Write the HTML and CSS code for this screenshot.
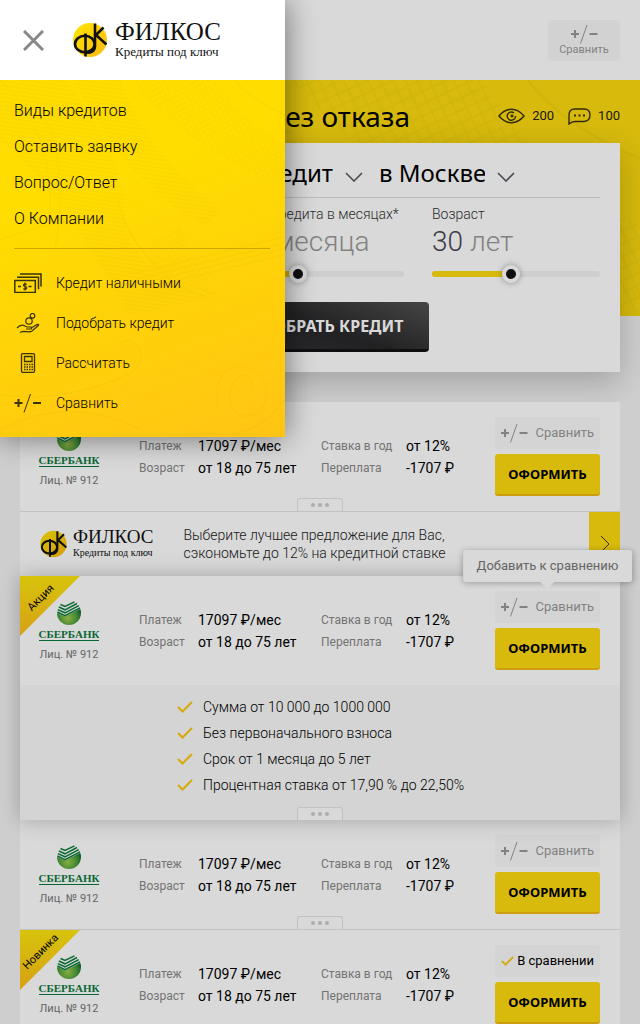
FILE: index.html
```html
<!DOCTYPE html>
<html lang="ru">
<head>
<meta charset="utf-8">
<meta name="viewport" content="width=device-width, initial-scale=1">
<title>Филкос</title>
<link rel="stylesheet" href="styles.css">
</head>
<body>
<svg class="defs" aria-hidden="true">
  <defs>
    <linearGradient id="gold" x1="0" y1="0" x2="1" y2="1"><stop offset="0" stop-color="#ffe600"/><stop offset="1" stop-color="#fcb913"/></linearGradient>
    <radialGradient id="green" cx=".45" cy=".7" r=".6"><stop offset="0" stop-color="#9fcb4e"/><stop offset=".65" stop-color="#4c9d3c"/><stop offset="1" stop-color="#0b6b35"/></radialGradient>
    <pattern id="mesh" width="7" height="7" patternUnits="userSpaceOnUse" patternTransform="rotate(20)"><path d="M0 0l7 7M7 0L0 7" stroke="#a88400" stroke-width=".6" fill="none"/></pattern>
    <pattern id="hatch" width="4" height="4" patternUnits="userSpaceOnUse" patternTransform="rotate(8)"><path d="M0 1h4" stroke="#a88400" stroke-width="1"/></pattern>
  </defs>
  <symbol id="mark" viewBox="0 0 34 36">
    <circle cx="17" cy="18" r="17" fill="url(#gold)"/>
    <g fill="none" stroke="#111" stroke-width="2.6"><ellipse cx="11.800" cy="22" rx="9.800" ry="8.200"/><path d="M12.500 11.500V34.500M12 30.500q9 1.500 10-6V1.500M30.500 5.500L23 13l10.500 9.500"/></g>
  </symbol>
  <symbol id="plusminus" viewBox="0 0 27 20">
    <path d="M0 10h8M4 6v8M18.500 10h8" stroke="currentColor" stroke-width="2" fill="none"/><path d="M16 1L9.500 19.500" stroke="currentColor" stroke-width="1" fill="none"/>
  </symbol>
  <symbol id="tick" viewBox="0 0 16 12"><path d="M1 6l4.500 4.500L15 1" fill="none" stroke="#fcc912" stroke-width="2.2"/></symbol>
  <symbol id="chevron" viewBox="0 0 18 10"><path d="M1 1l8 8 8-8" fill="none" stroke="#555962" stroke-width="1.6"/></symbol>
  <symbol id="ball" viewBox="0 0 24 24">
    <circle cx="12" cy="12" r="12" fill="url(#green)"/>
    <path d="M-1-1H25V7L8 15.500 0 12z" fill="#fff"/>
    <path d="M3.500 3.500L8 5.500 17.500.8M1.800 6L8 8.800 20 2.500M.8 8.600L8 11.800 21.800 4.600M.4 11L8 14.600 23 6.800" fill="none" stroke="#0e7d3c" stroke-width="1.500"/>
  </symbol>
  <symbol id="guilloche" viewBox="0 0 285 358">
    <g opacity=".07">
      <path d="M0 0H65Q130 80 125 150 145 200 210 218L130 236Q60 110 0 60z" fill="url(#hatch)"/>
      <path d="M75 0H120Q150 80 222 130L205 146Q120 100 75 0z" fill="url(#hatch)"/>
      <path d="M130 0H215Q240 40 285 65V105Q200 80 130 0zM150 160l30-15 32 65-62 12z" fill="url(#mesh)"/>
      <g fill="none" stroke="#a88400"><path d="M0 0Q60 55 48 150M20 0Q75 60 55 170M120 130Q150 205 210 218M118 120Q132 190 215 215M235 0Q250 20 285 35M130 195l155-38M135 200l150-37M145 203l140-34M155 206l130-31M0 160Q40 145 80 140M120 264c20-10 30 20 10 30q-60 30-130 22M0 350q70-35 140 0M218 330c-10-60 50-50 48-15s-45 25-35-5 30-5 18 5M190 350q60 20 95-30"/></g>
    </g>
  </symbol>
</svg>

<div class="page">
  <header class="topbar">
    <button class="compare-top" type="button"><svg class="pm"><use href="#plusminus"/></svg>Сравнить</button>
  </header>

  <section class="hero">
    <svg class="hero-art" viewBox="0 0 285 358" preserveAspectRatio="xMaxYMin slice" aria-hidden="true"><use href="#guilloche"/></svg>
    <div class="hero-head">
      <h1>Кредит без отказа</h1>
      <div class="stats">
        <span class="stat"><svg class="eye" viewBox="0 0 28 16"><g fill="none" stroke="#3a3208" stroke-width="1.5"><path d="M1 8Q7 1 14 1t13 7Q21 15 14 15T1 8z"/><path d="M16.500 4.700A4.300 4.300 0 1 0 18.200 8"/></g><circle cx="14.500" cy="8" r="1.500" fill="#3a3208"/></svg>200</span>
        <span class="stat"><svg class="bubble" viewBox="0 0 23 17"><path d="M1 16V7q0-6 6-6h9q6 0 6 6t-6 6.500H7q-3 0-6 2.500z" fill="none" stroke="#3a3208" stroke-width="1.400"/><path d="M6 7.500h2M10.500 7.500h2M15 7.500h2" stroke="#3a3208" stroke-width="2"/></svg>100</span>
      </div>
    </div>
    <form class="panel">
      <div class="pickers">
        <span class="picker picker-type"><select aria-label="Вид кредита"><option>Потребительский кредит</option></select><svg><use href="#chevron"/></svg></span>
        <span class="picker picker-city"><select aria-label="Город"><option>в Москве</option></select><svg><use href="#chevron"/></svg></span>
      </div>
      <div class="sliders">
        <div class="field field-term"><label for="term">Срок кредита в месяцах*</label><output for="term">24 <i>месяца</i></output><input id="term" type="range" min="0" max="68" value="24" style="--fill:36%"></div>
        <div class="field"><label for="age">Возраст</label><output for="age">30 <i>лет</i></output><input id="age" type="range" min="16" max="46" value="30" style="--fill:47%"></div>
      </div>
      <button class="pick" type="submit">ПОДОБРАТЬ КРЕДИТ</button>
    </form>
  </section>

  <main class="offers">
    <article class="offer">
      <div class="row">
        <div class="bank"><svg class="ball"><use href="#ball"/></svg><b>СБЕРБАНК</b><small>Лиц. № 912</small></div>
        <dl><dt>Платеж</dt><dd>17097 ₽/мес</dd><dt>Ставка в год</dt><dd>от 12%</dd><dt>Возраст</dt><dd>от 18 до 75 лет</dd><dt>Переплата</dt><dd>-1707 ₽</dd></dl>
        <div class="actions"><button class="compare" type="button"><svg class="pm"><use href="#plusminus"/></svg>Сравнить</button><button class="apply" type="button">ОФОРМИТЬ</button></div>
      </div>
      <button class="more" type="button" aria-label="Подробнее"><i></i><i></i><i></i></button>
    </article>

    <aside class="promo">
      <div class="brand brand-small"><svg><use href="#mark"/></svg><div><strong>ФИЛКОС</strong><span>Кредиты под ключ</span></div></div>
      <p>Выберите лучшее предложение для Вас,<br>сэкономьте до 12% на кредитной ставке</p>
      <a href="#" aria-label="Перейти"><svg viewBox="0 0 10 18"><path d="M1 1l8 8-8 8" fill="none" stroke="#3a3208" stroke-width="1"/></svg></a>
    </aside>

    <article class="offer offer-open">
      <div class="row">
        <span class="ribbon"><span>Акция</span></span>
        <div class="bank"><svg class="ball"><use href="#ball"/></svg><b>СБЕРБАНК</b><small>Лиц. № 912</small></div>
        <dl><dt>Платеж</dt><dd>17097 ₽/мес</dd><dt>Ставка в год</dt><dd>от 12%</dd><dt>Возраст</dt><dd>от 18 до 75 лет</dd><dt>Переплата</dt><dd>-1707 ₽</dd></dl>
        <div class="actions"><button class="compare" type="button"><svg class="pm"><use href="#plusminus"/></svg>Сравнить</button><span class="tip" role="tooltip">Добавить к сравнению</span><button class="apply" type="button">ОФОРМИТЬ</button></div>
      </div>
      <ul class="terms">
        <li><svg><use href="#tick"/></svg>Сумма от 10 000 до 1000 000</li>
        <li><svg><use href="#tick"/></svg>Без первоначального взноса</li>
        <li><svg><use href="#tick"/></svg>Срок от 1 месяца до 5 лет</li>
        <li><svg><use href="#tick"/></svg>Процентная ставка от 17,90 % до 22,50%</li>
      </ul>
      <button class="more" type="button" aria-label="Свернуть"><i></i><i></i><i></i></button>
    </article>

    <article class="offer">
      <div class="row">
        <div class="bank"><svg class="ball"><use href="#ball"/></svg><b>СБЕРБАНК</b><small>Лиц. № 912</small></div>
        <dl><dt>Платеж</dt><dd>17097 ₽/мес</dd><dt>Ставка в год</dt><dd>от 12%</dd><dt>Возраст</dt><dd>от 18 до 75 лет</dd><dt>Переплата</dt><dd>-1707 ₽</dd></dl>
        <div class="actions"><button class="compare" type="button"><svg class="pm"><use href="#plusminus"/></svg>Сравнить</button><button class="apply" type="button">ОФОРМИТЬ</button></div>
      </div>
      <button class="more" type="button" aria-label="Подробнее"><i></i><i></i><i></i></button>
    </article>

    <article class="offer">
      <div class="row">
        <span class="ribbon"><span>Новинка</span></span>
        <div class="bank"><svg class="ball"><use href="#ball"/></svg><b>СБЕРБАНК</b><small>Лиц. № 912</small></div>
        <dl><dt>Платеж</dt><dd>17097 ₽/мес</dd><dt>Ставка в год</dt><dd>от 12%</dd><dt>Возраст</dt><dd>от 18 до 75 лет</dd><dt>Переплата</dt><dd>-1707 ₽</dd></dl>
        <div class="actions"><button class="compare compare-on" type="button"><svg class="tick"><use href="#tick"/></svg>В сравнении</button><button class="apply" type="button">ОФОРМИТЬ</button></div>
      </div>
    </article>
  </main>
</div>

<div class="shade"></div>

<aside class="drawer">
  <div class="drawer-head">
    <button class="close" type="button" aria-label="Закрыть"><svg viewBox="0 0 21 21"><path d="M1 1l19 19M20 1L1 20" stroke="#888" stroke-width="3"/></svg></button>
    <div class="brand"><svg><use href="#mark"/></svg><div><strong>ФИЛКОС</strong><span>Кредиты под ключ</span></div></div>
  </div>
  <nav class="drawer-nav">
    <svg class="nav-art" viewBox="0 0 285 358" preserveAspectRatio="none" aria-hidden="true"><use href="#guilloche"/></svg>
    <ul class="links">
      <li><a href="#">Виды кредитов</a></li>
      <li><a href="#">Оставить заявку</a></li>
      <li><a href="#">Вопрос/Ответ</a></li>
      <li><a href="#">О Компании</a></li>
    </ul>
    <ul class="tools">
      <li><a href="#"><svg viewBox="0 0 28 20"><g fill="none" stroke="#3a3208" stroke-width="1.500"><path d="M.8 7.500h20.500v12H.8zM3 4.200h21.500v12M6 1h21v12.500"/><path d="M4 13.500h3M14.500 13.500h3" /><path d="M12.800 11.500q-2-1.200-3 0t1.300 2 1.300 2-3.100.2M11 9.500v8" stroke-width="1.200"/></g></svg>Кредит наличными</a></li>
      <li><a href="#"><svg viewBox="0 0 28 20"><g fill="none" stroke="#3a3208" stroke-width="1.200"><circle cx="18.500" cy="2.800" r="2.300"/><circle cx="15" cy="8" r="3.200"/><path d="M3 15q4-4.500 8-2l2 1h4q1.500 1.500-.5 2H12M17 15l6-3.500q2-.5 1.500.8L18 18q-1.500 1-4 .8l-4-.5q-2 0-4 1.200"/></g></svg>Подобрать кредит</a></li>
      <li><a href="#"><svg viewBox="0 0 28 20"><g fill="none" stroke="#3a3208" stroke-width="1.300"><rect x="7.500" y=".7" width="13" height="18.600" rx="1"/><path d="M10.500 3.500h7.500v5h-7.500z"/><path d="M10 11.500h9M10 14h9M10 16.500h9" stroke-dasharray="1.500 1"/></g></svg>Рассчитать</a></li>
      <li><a href="#"><svg class="pm"><use href="#plusminus"/></svg>Сравнить</a></li>
    </ul>
  </nav>
</aside>
</body>
</html>
```
FILE: styles.css
```css
* { box-sizing: border-box; }
html, body { height: 100%; }
body { margin: 0; overflow: hidden; background: #f3f3f3; color: #000; font: 14px/22px Roboto, "Noto Sans", sans-serif; }
ul, dl, dd, p, h1 { margin: 0; padding: 0; list-style: none; }
button { border: 0; padding: 0; font: inherit; color: inherit; cursor: pointer; }
a { color: inherit; text-decoration: none; }
svg { display: block; flex: none; }
.defs { position: absolute; width: 0; height: 0; }
.pm { width: 27px; height: 20px; }

.topbar { display: flex; justify-content: flex-end; padding: 20px; height: 80px; background: #fff; }
.compare-top { display: flex; flex-direction: column; align-items: center; width: 72px; height: 41px; padding-top: 4px; border-radius: 4px; background: #f7f7f7; color: #999; font-size: 11px; line-height: 12px; }

.hero { position: relative; padding: 12px 20px 0; margin-bottom: 30px; background: linear-gradient(#fddb0e, #fddb0e) no-repeat; background-size: 100% 236px; }
.hero-art { position: absolute; left: 0; top: 0; width: 100%; height: 236px; }
.hero-head { position: relative; display: flex; justify-content: space-between; align-items: center; height: 51px; padding-bottom: 3px; }
h1 { width: 65%; text-align: right; font: 400 28px/40px "Noto Sans", sans-serif; }
.stats { display: flex; gap: 14px; font-size: 13px; font-weight: 400; color: #222; }
.stat { display: flex; align-items: center; gap: 7px; }
.eye { width: 27px; height: 16px; }
.bubble { width: 23px; height: 17px; }

.panel { position: relative; display: flex; flex-direction: column; padding: 10px 20px 20px; background: #fff; box-shadow: 0 10px 30px rgba(0, 0, 0, .22); }
.pickers { display: flex; gap: 16px; height: 45px; border-bottom: 1px solid #ddd; }
.picker { position: relative; height: 44px; display: flex; align-items: center; }
.picker-type { flex: 0 0 323px; }
.picker-city { flex: 0 0 136px; }
.picker select { width: 100%; height: 44px; padding: 0 30px 4px 0; border: 0; background: none; appearance: none; color: #000; font: 400 24px/32px "Noto Sans", sans-serif; }
.picker-type select { text-align: right; text-align-last: right; }
.picker svg { position: absolute; right: 0; top: 19px; width: 18px; height: 10px; pointer-events: none; }
.sliders { display: grid; grid-template-columns: repeat(3, 1fr); gap: 28px; padding-top: 6px; }
.field { display: flex; flex-direction: column; }
.field-term { grid-column: 2; }
.field label { font-size: 14px; font-weight: 300; line-height: 20px; color: #333; white-space: nowrap; }
.field output { font-size: 28px; font-weight: 300; line-height: 36px; color: #444752; }
.field i { font-style: normal; color: #999; }
.field input { width: 100%; height: 18px; margin: 5px 0 0; appearance: none; background: none; }
.field input::-webkit-slider-runnable-track { height: 6px; border-radius: 3px; background: linear-gradient(to right, #fddb0e var(--fill), #f3f3f3 var(--fill)); }
.field input::-webkit-slider-thumb { appearance: none; width: 18px; height: 18px; margin-top: -6px; border: 4px solid #fff; border-radius: 50%; background: #111; box-shadow: 0 0 6px rgba(0, 0, 0, .35); }
.pick { align-self: center; width: 218px; height: 50px; margin-top: 19px; border-radius: 4px; border-bottom: 3px solid #111; background: linear-gradient(20deg, #333338, #28282a 50%, #525252); color: #fff; font: 700 16px/20px "Noto Sans", sans-serif; white-space: nowrap; }

.offers { margin: 0 20px; }
.offer { position: relative; background: #fff; border-bottom: 1px solid #e4e4e4; }
.offer-open { z-index: 1; border-bottom: 0; box-shadow: 0 0 20px rgba(0, 0, 0, .25); }
.row { display: grid; grid-template-columns: 58px 1fr 105px; align-items: center; padding: 15px 20px; }
.bank { display: flex; flex-direction: column; align-items: center; padding-top: 4px; }
.ball { width: 24px; height: 24px; }
.bank b { margin-top: 3px; border-bottom: 1px solid #0b7a3e; color: #0b7a3e; font: 700 11px/12px "Liberation Serif", serif; }
.bank small { margin-top: 4px; font-size: 11px; font-weight: 400; line-height: 20px; color: #777; white-space: nowrap; }
.row dl { display: grid; grid-template-columns: 59px 123px 85px 1fr; padding-left: 41px; white-space: nowrap; }
.row dt { font-size: 12px; font-weight: 400; color: #888; }
.row dd { font-weight: 400; }
.actions { position: relative; display: flex; flex-direction: column; gap: 5px; }
.compare { display: flex; align-items: center; justify-content: space-between; height: 32px; padding: 0 6px; border-radius: 4px; background: #f9f9f9; color: #999; font-size: 13px; font-weight: 400; }
.compare-on { color: #000; font-size: 13px; font-weight: 400; }
.tick { width: 13px; height: 10px; }
.apply { height: 42px; border-radius: 3px; border-bottom: 2px solid #f2b912; background: #fddb0e; font: 700 13px/20px "Noto Sans", sans-serif; }
.more { position: absolute; left: 50%; bottom: 0; margin-left: -23px; display: flex; align-items: center; justify-content: center; gap: 3px; width: 46px; height: 13px; border: 1px solid #e4e4e4; border-bottom: 0; border-radius: 3px 3px 0 0; background: #fff; }
.more i { width: 4px; height: 4px; border-radius: 50%; background: #ccc; }
.ribbon { position: absolute; left: 0; top: 0; width: 60px; height: 60px; background: linear-gradient(#fde60e, #fdbd1a); clip-path: polygon(0 0, 100% 0, 0 100%); }
.ribbon span { position: absolute; left: -9px; top: 12px; width: 60px; font-size: 11px; line-height: 20px; text-align: center; transform: rotate(-45deg); }
.tip { position: absolute; left: 50%; bottom: calc(100% + 9px); z-index: 2; transform: translateX(-50%); padding: 5px 14px; border-radius: 3px; background: #fff; box-shadow: 0 1px 6px rgba(0, 0, 0, .3); color: #777; font-size: 13px; font-weight: 400; white-space: nowrap; }
.tip::after { content: ""; position: absolute; left: 50%; top: 100%; margin-left: -7px; border: 7px solid transparent; border-top-color: #fff; border-bottom: 0; }

.promo { display: flex; align-items: center; height: 64px; padding-left: 20px; background: #fff; }
.promo p { flex: 1; padding-left: 30px; font-weight: 300; line-height: 18px; color: #222; white-space: nowrap; }
.promo a { display: flex; align-items: center; justify-content: center; width: 31px; height: 100%; background: #fddb0e; }
.promo a svg { width: 10px; height: 18px; }

.terms { padding: 9px 20px 22px 157px; background: #f9f9f9; }
.terms li { display: flex; align-items: center; gap: 10px; line-height: 26px; font-weight: 300; color: #000; }
.terms svg { width: 16px; height: 12px; }

.shade { position: fixed; inset: 0; z-index: 5; background: rgba(0, 0, 0, .15); }

.drawer { position: fixed; left: 0; top: 0; z-index: 6; width: 285px; box-shadow: 0 0 30px rgba(0, 0, 0, .5); }
.drawer-head { display: flex; align-items: center; gap: 29px; height: 80px; padding-left: 23px; background: #fff; }
.close { width: 21px; height: 21px; background: none; }
.brand { display: flex; align-items: center; gap: 8px; font-family: "Liberation Serif", serif; color: #111; white-space: nowrap; }
.brand svg { width: 34px; height: 36px; }
.brand strong, .brand span { display: block; font-weight: 400; }
.brand strong { font-size: 25px; line-height: 24px; }
.brand span { font-size: 13px; line-height: 16px; }
.brand-small { gap: 6px; }
.brand-small svg { width: 27px; height: 28px; }
.brand-small strong { font-size: 19px; line-height: 18px; }
.brand-small span { font-size: 10px; line-height: 14px; }

.drawer-nav { position: relative; padding: 13px 15px 14px 14px; background: linear-gradient(160deg, #ffdd00 30%, #ffc414); font-weight: 300; }
.nav-art { position: absolute; left: 0; top: 0; width: 100%; height: 100%; }
.links, .tools { position: relative; }
.links { padding-bottom: 11px; border-bottom: 1px solid #d0a50a; }
.links a { display: block; font-size: 16px; line-height: 36px; }
.tools { padding-top: 14px; }
.tools a { display: flex; align-items: center; gap: 14px; height: 40px; }
.tools svg { width: 28px; height: 20px; color: #3a3208; }
```
